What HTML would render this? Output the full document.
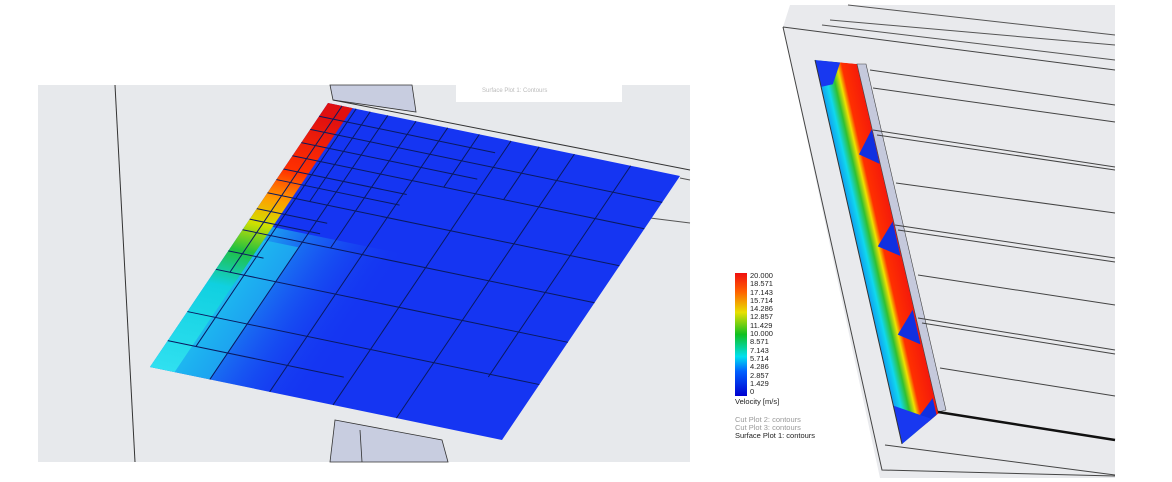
<!DOCTYPE html>
<html><head><style>
html,body{margin:0;padding:0;background:#fff;width:1172px;height:482px;overflow:hidden;font-family:"Liberation Sans",sans-serif}
.leg{position:absolute;left:735px;top:272px;font-size:7.5px;line-height:8.3px;color:#222}
</style></head><body>
<svg width="1172" height="482" style="position:absolute;left:0;top:0">
<defs>
<linearGradient id="cbar" x1="0" y1="1" x2="0" y2="0">
<stop offset="0" stop-color="#0000d0"/><stop offset="0.2" stop-color="#0060ff"/><stop offset="0.32" stop-color="#00e0f0"/><stop offset="0.5" stop-color="#10c020"/><stop offset="0.68" stop-color="#e8e000"/><stop offset="0.85" stop-color="#ff6000"/><stop offset="1" stop-color="#f01010"/>
</linearGradient>
<linearGradient id="lu" x1="0" y1="0" x2="1" y2="0">
<stop offset="0" stop-color="#20d8f0" stop-opacity="0.9"/><stop offset="1" stop-color="#1535f2" stop-opacity="0"/>
</linearGradient>
<linearGradient id="lv" x1="0" y1="0" x2="0" y2="1">
<stop offset="0.05" stop-color="#e01010"/><stop offset="0.25" stop-color="#ff3000"/><stop offset="0.36" stop-color="#ffa000"/><stop offset="0.45" stop-color="#d0e000"/><stop offset="0.55" stop-color="#20c040"/><stop offset="0.68" stop-color="#10d0e0"/><stop offset="1" stop-color="#30e0f0"/>
</linearGradient>
<linearGradient id="strip" x1="0" y1="0" x2="1" y2="0">
<stop offset="0" stop-color="#10a0f0"/><stop offset="0.15" stop-color="#10d8f0"/><stop offset="0.3" stop-color="#30c030"/><stop offset="0.42" stop-color="#f0e000"/><stop offset="0.52" stop-color="#ff3000"/><stop offset="1" stop-color="#f01010"/>
</linearGradient>
<clipPath id="sc"><path d="M815 60 L857 64 L940 412 L902 444 Z"/></clipPath>
</defs>

<rect x="38" y="85" width="652" height="377" fill="#e7e9ec"/>
<line x1="115" y1="85" x2="135" y2="462" stroke="#333" stroke-width="1"/>
<line x1="650" y1="218" x2="690" y2="223" stroke="#555"/>
<line x1="680" y1="178" x2="690" y2="180" stroke="#555"/>
<path d="M330 85 L412 85 L416 112 L333 100 Z" fill="#c8cde0" stroke="#333" stroke-width="0.8"/>
<line x1="333" y1="100" x2="690" y2="170" stroke="#333" stroke-width="1"/>
<path d="M335 420 L442 440 L448 462 L330 462 Z" fill="#c8cde0" stroke="#333" stroke-width="0.8"/>
<line x1="360" y1="430" x2="362" y2="462" stroke="#333" stroke-width="0.8"/>
<rect x="456" y="85" width="166" height="17" fill="#fff"/>
<text x="482" y="92" font-size="6" fill="#bbb">Surface Plot 1: Contours</text>

<g transform="matrix(352,73,-178,264,328,103)">
<rect x="0" y="0" width="1" height="1" fill="#1535f2"/>
<rect x="0" y="0.45" width="0.45" height="0.55" fill="url(#lu)"/>
<rect x="0" y="0" width="0.07" height="1" fill="url(#lv)"/>
<rect x="0.07" y="0.5" width="0.1" height="0.5" fill="#20c8f0" opacity="0.6"/>
<g fill="none" stroke="#0a1a60" stroke-width="1">
<path vector-effect="non-scaling-stroke" d="M0 0.1H1M0 0.2H1M0 0.34H1M0 0.48H1M0 0.63H1M0 0.79H1M0 0.9H0.5M0 0.05H0.5M0 0.15H0.5M0 0.25H0.35M0 0.29H0.35M0 0.4H0.2M0 0.44H0.2M0 0.56H0.1"/>
<path vector-effect="non-scaling-stroke" d="M0.17 0V1M0.34 0V1M0.52 0V1M0.7 0V1M0.86 0V0.8M0.08 0V0.9M0.25 0V0.48M0.12 0V0.34M0.04 0V0.63M0.43 0V0.2M0.6 0V0.2"/>
</g>
</g>

<rect x="735" y="273" width="12" height="123" fill="url(#cbar)"/>

<path d="M790 5 L1115 5 L1115 478 L880 478 L783 27 Z" fill="#e9eaed"/>
<path d="M783 27 L1115 70" stroke="#444" fill="none"/>
<path d="M783 27 L882 470 L1115 476" stroke="#444" fill="none"/>
<path d="M822 25 L1115 60 M830 20 L1115 45 M848 5 L1115 35" stroke="#555" fill="none"/>
<g clip-path="url(#sc)">
<g transform="matrix(42,4,87,384,815,60)">
<rect x="0" y="0" width="1.2" height="1" fill="url(#strip)"/>
<path d="M1 0.17 L0.55 0.24 L1 0.26Z M1 0.41 L0.5 0.48 L1 0.5Z M1 0.64 L0.5 0.71 L1 0.73Z M1 0.87 L0.5 0.93 L1 0.95Z" fill="#1030e0"/>
<path d="M0 0 L0.6 0 L0.3 0.06 L0 0.07Z" fill="#1838f0"/>
<path d="M0 0.9 L1 0.93 L1 1 L0 1Z" fill="#1838f0"/>
</g>
</g>
<path d="M815 60 L902 444" stroke="#333"/>
<path d="M857 64 L866 64 L946 410 L938 412 Z" fill="#c5c9dc" stroke="#444" stroke-width="0.6"/>
<g stroke="#444" fill="none" stroke-width="1">
<path d="M870 70 L1115 105"/>
<path d="M873 88 L1115 122"/>
<path d="M873 130 L1115 167"/>
<path d="M877 135 L1115 170"/>
<path d="M896 183 L1115 213"/>
<path d="M895 225 L1115 258"/>
<path d="M898 230 L1115 262"/>
<path d="M918 275 L1115 305"/>
<path d="M918 318 L1115 350"/>
<path d="M922 323 L1115 354"/>
<path d="M940 368 L1115 396"/>
<path d="M938 412 L1115 440" stroke-width="2.5" stroke="#111"/>
<path d="M885 445 L1115 475"/>
</g>
</svg>
<div class="leg">
<div style="margin-left:15px">20.000<br>18.571<br>17.143<br>15.714<br>14.286<br>12.857<br>11.429<br>10.000<br>8.571<br>7.143<br>5.714<br>4.286<br>2.857<br>1.429<br>0</div>
<div style="margin-top:2px">Velocity [m/s]</div>
<div style="margin-top:9px;color:#999">Cut Plot 2: contours<br>Cut Plot 3: contours</div>
<div>Surface Plot 1: contours</div>
</div>
</body></html>
